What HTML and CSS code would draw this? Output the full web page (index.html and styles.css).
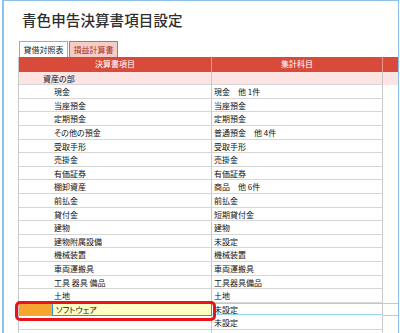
FILE: index.html
```html
<!DOCTYPE html>
<html lang="ja">
<head>
<meta charset="utf-8">
<title>青色申告決算書項目設定</title>
<link rel="stylesheet" href="styles.css">
</head>
<body>
<div class="frame">
  <h1 class="title">青色申告決算書項目設定</h1>
  <div class="tabs">
    <span class="tab active">貸借対照表</span>
    <span class="tab other">損益計算書</span>
  </div>
  <div class="grid">
    <div class="row head"><div class="c1">決算書項目</div><div class="c2">集計科目</div><div class="c3"></div></div>
    <div class="row section"><div class="c1 lvl1">資産の部</div><div class="c2"></div><div class="c3"></div></div>
    <div class="row"><div class="c1 lvl2">現金</div><div class="c2">現金　他 1件</div><div class="c3"></div></div>
    <div class="row"><div class="c1 lvl2">当座預金</div><div class="c2">当座預金</div><div class="c3"></div></div>
    <div class="row"><div class="c1 lvl2">定期預金</div><div class="c2">定期預金</div><div class="c3"></div></div>
    <div class="row"><div class="c1 lvl2">その他の預金</div><div class="c2">普通預金　他 4件</div><div class="c3"></div></div>
    <div class="row"><div class="c1 lvl2">受取手形</div><div class="c2">受取手形</div><div class="c3"></div></div>
    <div class="row"><div class="c1 lvl2">売掛金</div><div class="c2">売掛金</div><div class="c3"></div></div>
    <div class="row"><div class="c1 lvl2">有価証券</div><div class="c2">有価証券</div><div class="c3"></div></div>
    <div class="row"><div class="c1 lvl2">棚卸資産</div><div class="c2">商品　他 6件</div><div class="c3"></div></div>
    <div class="row"><div class="c1 lvl2">前払金</div><div class="c2">前払金</div><div class="c3"></div></div>
    <div class="row"><div class="c1 lvl2">貸付金</div><div class="c2">短期貸付金</div><div class="c3"></div></div>
    <div class="row"><div class="c1 lvl2">建物</div><div class="c2">建物</div><div class="c3"></div></div>
    <div class="row"><div class="c1 lvl2">建物附属設備</div><div class="c2">未設定</div><div class="c3"></div></div>
    <div class="row"><div class="c1 lvl2">機械装置</div><div class="c2">機械装置</div><div class="c3"></div></div>
    <div class="row"><div class="c1 lvl2">車両運搬具</div><div class="c2">車両運搬具</div><div class="c3"></div></div>
    <div class="row"><div class="c1 lvl2">工具 器具 備品</div><div class="c2">工具器具備品</div><div class="c3"></div></div>
    <div class="row"><div class="c1 lvl2">土地</div><div class="c2">土地</div><div class="c3"></div></div>
    <div class="row selected">
      <div class="c1"><span class="mark"></span><span class="edit">ソフトウェア</span></div>
      <div class="c2">未設定</div><div class="c3"></div>
    </div>
    <div class="row"><div class="c1 lvl2"></div><div class="c2">未設定</div><div class="c3"></div></div>
    <div class="row"><div class="c1 lvl2"></div><div class="c2"></div><div class="c3"></div></div>
  </div>
  <div class="highlight"></div>
</div>
</body>
</html>
```
FILE: styles.css
```css
body {
  margin: 0;
  background: #fff;
  font-family: "Noto Sans CJK JP", "Noto Sans", sans-serif;
}

.frame {
  position: relative;
  margin-left: 2px;
  width: 397px;
  height: 333px;
  box-sizing: border-box;
  border-style: solid;
  border-color: #8dc1ea;
  border-width: 1px 1px 0 2px;
  overflow: hidden;
}

.title {
  margin: 7px 0 0 18px;
  font-size: 14.5px;
  line-height: 24px;
  font-weight: 500;
  color: #2e2e2e;
  letter-spacing: 0.1px;
}

.tabs {
  display: flex;
  gap: 1px;
  margin: 9px 0 0 15px;
  height: 16px;
}

.tab {
  width: 49px;
  height: 16px;
  box-sizing: border-box;
  border: 1px solid #a8a8a8;
  border-bottom: none;
  font-size: 8px;
  line-height: 15px;
  text-align: center;
}

.tab.active {
  background: #fff;
  color: #222;
}

.tab.other {
  background: #f4cdc7;
  border-color: #d2685a;
  color: #a8352a;
}

.grid {
  margin-left: 14px;
  width: 380px;
  box-sizing: border-box;
  border-left: 1px solid #c8c8c8;
}

.row {
  display: grid;
  grid-template-columns: 193px 171px 15px;
  height: 13.6px;
  font-size: 8px;
  line-height: 13px;
  color: #111;
  font-feature-settings: "palt";
}

.row > div {
  box-sizing: border-box;
  border-bottom: 1px solid #d6d6d6;
  border-right: 1px solid #c8c8c8;
  white-space: nowrap;
  overflow: hidden;
}

.row > .c3 {
  border-right: none;
  border-bottom: none;
}

.row .c2 {
  padding-left: 2px;
}

.lvl1 {
  padding-left: 24px;
}

.lvl2 {
  padding-left: 35px;
}

.head {
  height: 14.6px;
  background: #d84b3b;
  color: #fff;
  text-align: center;
  line-height: 14px;
}

.head > div {
  border-bottom: none;
  border-right-color: #ec968c;
}

.head .c2 {
  padding-left: 0;
}

.section {
  background: #fce4e2;
}

.selected > .c1 {
  display: flex;
  border-right: none;
  border-bottom: none;
}

.mark {
  width: 33px;
  background: #f6a530;
}

.edit {
  width: 160px;
  box-sizing: border-box;
  background: #ffffc4;
  border: 1px solid #3390dd;
  padding-left: 3px;
  line-height: 11px;
  color: #111;
}

.selected > .c2,
.selected > .c3 {
  border-bottom-color: transparent;
  box-shadow: inset 0 1px #98d8ee, inset 0 -1px #98d8ee;
}

.highlight {
  position: absolute;
  left: 11px;
  top: 300px;
  width: 201px;
  height: 19.5px;
  box-sizing: border-box;
  border: 3px solid #e8141c;
  border-radius: 5px;
}
```
